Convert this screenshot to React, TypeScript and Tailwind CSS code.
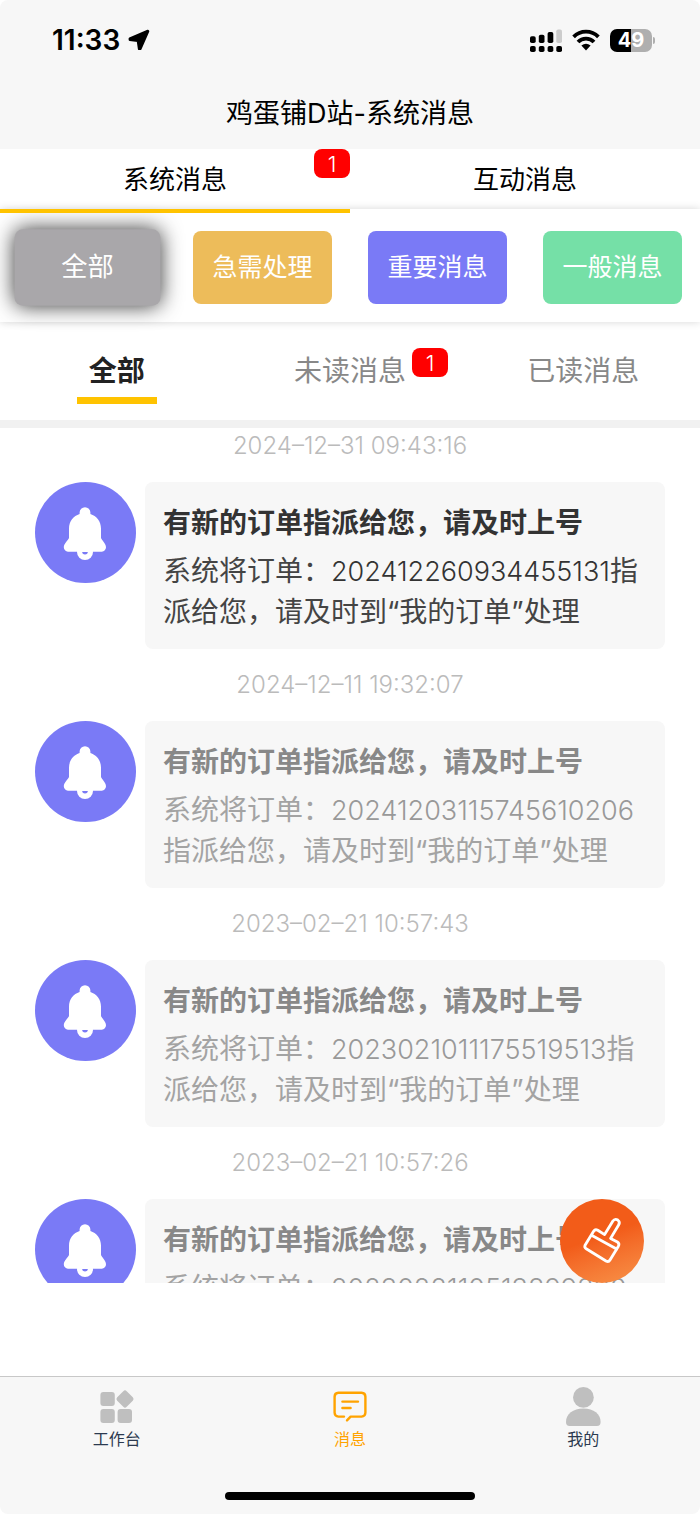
import { useState } from 'react';
import { clsx } from 'clsx';

interface Message {
  id: string;
  date: string;
  orderNo: string;
  read: boolean;
}

const MESSAGES: Message[] = [
  { id: 'm1', date: '2024–12–31 09:43:16', orderNo: '202412260934455131', read: false },
  { id: 'm2', date: '2024–12–11 19:32:07', orderNo: '20241203115745610206', read: true },
  { id: 'm3', date: '2023–02–21 10:57:43', orderNo: '2023021011175519513', read: true },
  { id: 'm4', date: '2023–02–21 10:57:26', orderNo: '2023022110513899820', read: true },
];

const LEVELS = [
  { id: 'all', label: '全部', color: 'bg-[#a9a7aa]' },
  { id: 'urgent', label: '急需处理', color: 'bg-[#edbc5a]' },
  { id: 'important', label: '重要消息', color: 'bg-[#7a7af6]' },
  { id: 'normal', label: '一般消息', color: 'bg-[#75e0a7]' },
];

function Badge({ count, className }: { count: number; className?: string }) {
  return (
    <span
      className={clsx(
        'absolute flex h-[29px] w-9 items-center justify-center rounded-lg bg-[#ff0000] text-[22px] leading-none font-light text-white',
        className
      )}
    >
      {count}
    </span>
  );
}

function StatusBar() {
  return (
    <div className="flex h-20 items-center justify-between pr-[45px] pl-[52px]">
      <div className="flex items-center gap-2">
        <span className="text-[28px] leading-8 font-semibold">11:33</span>
        <svg width="22" height="22" viewBox="0 0 22 22">
          <path
            d="M19.8 1.8 L1.7 9.4 L1.7 10.8 L9.8 11.8 L11 20 L12.4 20 L20.2 2.2 Z"
            stroke="#000"
            strokeWidth="2.2"
            strokeLinejoin="round"
          />
        </svg>
      </div>
      <div className="flex items-center gap-[10px]">
        <svg width="32" height="23" viewBox="0 0 32 23">
          <rect x="0" y="7.2" width="5.7" height="6.8" rx="1.8" />
          <rect x="8.8" y="5.8" width="5.7" height="8.2" rx="1.8" />
          <rect x="17.6" y="3" width="5.7" height="11" rx="1.8" />
          <rect x="26.3" y="0.4" width="5.7" height="13.6" rx="1.8" fill="#ccc" />
          <rect x="0" y="17" width="5.7" height="6" rx="1.8" />
          <rect x="8.8" y="17" width="5.7" height="6" rx="1.8" />
          <rect x="17.6" y="17" width="5.7" height="6" rx="1.8" />
          <rect x="26.3" y="17" width="5.7" height="6" rx="1.8" />
        </svg>
        <svg width="28" height="22" viewBox="0 0 28 22" fill="none" stroke="#000" strokeWidth="3.8">
          <path d="M1.6 7.8 A17.6 17.6 0 0 1 26.4 7.8" />
          <path d="M6 13 A11 11 0 0 1 22 13" />
          <path d="M9.4 16.6 Q14 12.8 18.6 16.6 L14 21.4 Z" fill="#000" stroke="none" />
        </svg>
        <div className="flex items-center gap-px">
          <div className="flex h-[23px] w-[42px] items-center justify-center rounded-[7px] bg-linear-to-r from-black from-50% to-[#afafaf] to-50% text-[20px] leading-none font-bold text-white">
            49
          </div>
          <div className="h-[7px] w-[2px] rounded-r-full bg-[#afafaf]" />
        </div>
      </div>
    </div>
  );
}

function BellIcon() {
  return (
    <svg className="shrink-0" width="101" height="101" viewBox="0 0 101 101">
      <circle cx="50.5" cy="50.5" r="50.5" fill="#7a7af6" />
      <circle cx="50" cy="70" r="8" fill="#fff" />
      <path
        d="M44.6 30.6 a5.4 5.4 0 0 1 10.8 0 v1.4 C61.5 34 66 39.4 66 46.5 V56 C66.6 58 71 61.5 71 65.2 A4.4 4.4 0 0 1 66.8 69.7 H33 A4.4 4.4 0 0 1 28.8 65.2 C28.8 61.5 33.4 58 34 56 V46.5 C34 39.4 38.5 34 44.6 32 Z"
        fill="#fff"
      />
      <path d="M47.2 70 h5.6 a2.8 2.4 0 0 1 -5.6 0 Z" fill="#7a7af6" />
    </svg>
  );
}

function MessageItem({ message }: { message: Message }) {
  return (
    <li>
      <time className="block text-center text-[24px] leading-9 font-light text-[#bbb]">{message.date}</time>
      <div className="my-[18px] flex items-start gap-[9px]">
        <BellIcon />
        <article className="min-w-0 flex-1 rounded-lg bg-[#f7f7f7] px-[18px] pt-[21px] pb-4">
          <h2
            className={clsx(
              'text-[28px] leading-10 font-bold whitespace-nowrap',
              message.read ? 'text-[#888]' : 'text-[#333]'
            )}
          >
            有新的订单指派给您，请及时上号
          </h2>
          <p
            className={clsx(
              'mt-2 text-[28px] leading-[41px] break-all',
              message.read ? 'text-[#a3a3a3]' : 'text-[#444]'
            )}
          >
            系统将订单：
            <span className={clsx('text-[27px] font-light', message.read ? 'text-[#999]' : 'text-[#333]')}>
              {message.orderNo}
            </span>
            指派给您，请及时到“我的订单”处理
          </p>
        </article>
      </div>
    </li>
  );
}

function WorkbenchIcon() {
  return (
    <svg width="40" height="40" viewBox="0 0 40 40" fill="#bfbfbf">
      <rect x="3.4" y="5" width="14.4" height="14" rx="3" />
      <rect x="3.4" y="22" width="14.4" height="14" rx="3" />
      <rect x="20.6" y="22" width="14.4" height="14" rx="3" />
      <rect x="21.3" y="5.3" width="13.4" height="13.4" rx="2.4" transform="rotate(45 28 12)" />
    </svg>
  );
}

function ChatIcon() {
  return (
    <svg
      width="40"
      height="40"
      viewBox="0 0 40 40"
      fill="none"
      stroke="#ffa300"
      strokeWidth="2.4"
      strokeLinecap="round"
      strokeLinejoin="round"
    >
      <path d="M14 29.6 H8.4 A4 4 0 0 1 4.6 25.8 V9.6 A4 4 0 0 1 8.4 5.8 H31.6 A4 4 0 0 1 35.4 9.6 V25.8 A4 4 0 0 1 31.6 29.6 H20.6 L17 33.4" />
      <path d="M12.4 14.6 H28 M12.4 21 H20.6" />
    </svg>
  );
}

function MineIcon() {
  return (
    <svg width="40" height="40" viewBox="0 0 40 40" fill="#bfbfbf">
      <circle cx="20.4" cy="10.4" r="10.4" />
      <path d="M3 35 C3 27 10 21.6 20.4 21.6 S37.6 27 37.6 35 Q37.6 39 34 39 H6.6 Q3 39 3 35 Z" />
    </svg>
  );
}

const NAV = [
  { id: 'work', label: '工作台', Icon: WorkbenchIcon },
  { id: 'message', label: '消息', Icon: ChatIcon },
  { id: 'mine', label: '我的', Icon: MineIcon },
];

export default function App() {
  const [tab, setTab] = useState('system');
  const [level, setLevel] = useState('all');
  const [filter, setFilter] = useState('all');

  const messages = MESSAGES.filter((m) => filter === 'all' || m.read === (filter === 'read'));

  return (
    <div className="flex h-screen flex-col bg-white font-['Inter','Noto_Sans_CJK_SC',sans-serif] text-black">
      <header className="rounded-t-lg bg-[#f7f7f7]">
        <StatusBar />
        <h1 className="h-[69px] text-center text-[27px] leading-[68px] font-normal">鸡蛋铺D站-系统消息</h1>
      </header>

      {/* Main tabs */}
      <div className="grid h-[60px] grid-cols-2">
        {[
          { id: 'system', label: '系统消息', count: 1 },
          { id: 'interact', label: '互动消息', count: 0 },
        ].map((t) => (
          <button
            key={t.id}
            onClick={() => setTab(t.id)}
            className="relative h-[60px] pt-px text-[26px] leading-[60px]"
          >
            {t.label}
            {t.count > 0 && <Badge count={t.count} className="top-0 right-0" />}
            {tab === t.id && <span className="absolute inset-x-0 top-full z-10 h-1 bg-[#ffc300]" />}
          </button>
        ))}
      </div>

      {/* Level filter */}
      <div className="grid grid-cols-4 gap-9 px-[18px] pt-[22px] pb-[18px] shadow-[0_0_8px_rgba(0,0,0,0.16)]">
        {LEVELS.map((l) => (
          <button
            key={l.id}
            onClick={() => setLevel(l.id)}
            className={clsx(
              'h-[73px] rounded-lg text-[25px] whitespace-nowrap text-white',
              l.color,
              level === l.id && 'scale-105 shadow-[0_0_20px_rgba(0,0,0,0.8)]'
            )}
          >
            {l.label}
          </button>
        ))}
      </div>

      {/* Read state filter */}
      <div className="grid grid-cols-3 border-b-8 border-[#f1f1f1]">
        {[
          { id: 'all', label: '全部', count: 0 },
          { id: 'unread', label: '未读消息', count: 1 },
          { id: 'read', label: '已读消息', count: 0 },
        ].map((f) => (
          <button
            key={f.id}
            onClick={() => setFilter(f.id)}
            className={clsx(
              'flex h-[98px] flex-col items-center pt-[29px] text-[28px] leading-10',
              filter === f.id ? 'font-bold text-[#222]' : 'font-normal text-[#888]'
            )}
          >
            <span className="relative">
              {f.label}
              {f.count > 0 && <Badge count={f.count} className="-top-[3px] left-full ml-1.5" />}
            </span>
            {filter === f.id && <span className="mt-1.5 h-[7px] w-20 bg-[#ffc300]" />}
          </button>
        ))}
      </div>

      {/* Messages */}
      <main className="relative mb-[93px] min-h-0 flex-1">
        <ul className="h-full overflow-y-auto px-[35px] [scrollbar-width:none]">
          {messages.map((m) => (
            <MessageItem key={m.id} message={m} />
          ))}
        </ul>
        <button
          aria-label="清除未读"
          className="absolute right-14 bottom-0 size-[84px] rounded-full bg-linear-160 from-[#f25c19] from-45% to-[#f79248]"
        >
          <svg
            width="84"
            height="84"
            viewBox="0 0 84 84"
            fill="none"
            stroke="#fff"
            strokeWidth="2.8"
            strokeLinecap="round"
            strokeLinejoin="round"
          >
            <path d="M25.2 46 L33.6 32.2 Q35.2 29.8 37.8 31.2 L44.6 35.6 L52.6 22.4 Q54.8 19.2 57.8 21 Q60.4 23 58.6 26 L50.6 39.4 L57.4 43 Q59.8 44.6 58.4 47.2 L50 61 Q48.6 63.4 46 62 L26.2 49.8 Q24 48.4 25.2 46 Z" />
            <path d="M32 36.4 L56.6 50" />
          </svg>
        </button>
      </main>

      {/* Bottom navigation */}
      <footer className="rounded-b-lg border-t border-[#c8c8c8] bg-[#f7f7f7]">
        <nav className="grid grid-cols-3 pt-2.5">
          {NAV.map(({ id, label, Icon }) => (
            <a
              key={id}
              href={`#${id}`}
              className={clsx(
                'flex flex-col items-center text-[16px] leading-6',
                id === 'message' ? 'text-[#ffa300]' : 'text-[#2c3a4f]'
              )}
            >
              <Icon />
              {label}
            </a>
          ))}
        </nav>
        <div className="mx-auto mt-[41px] mb-3.5 h-2 w-[250px] rounded-full bg-black" />
      </footer>
    </div>
  );
}
